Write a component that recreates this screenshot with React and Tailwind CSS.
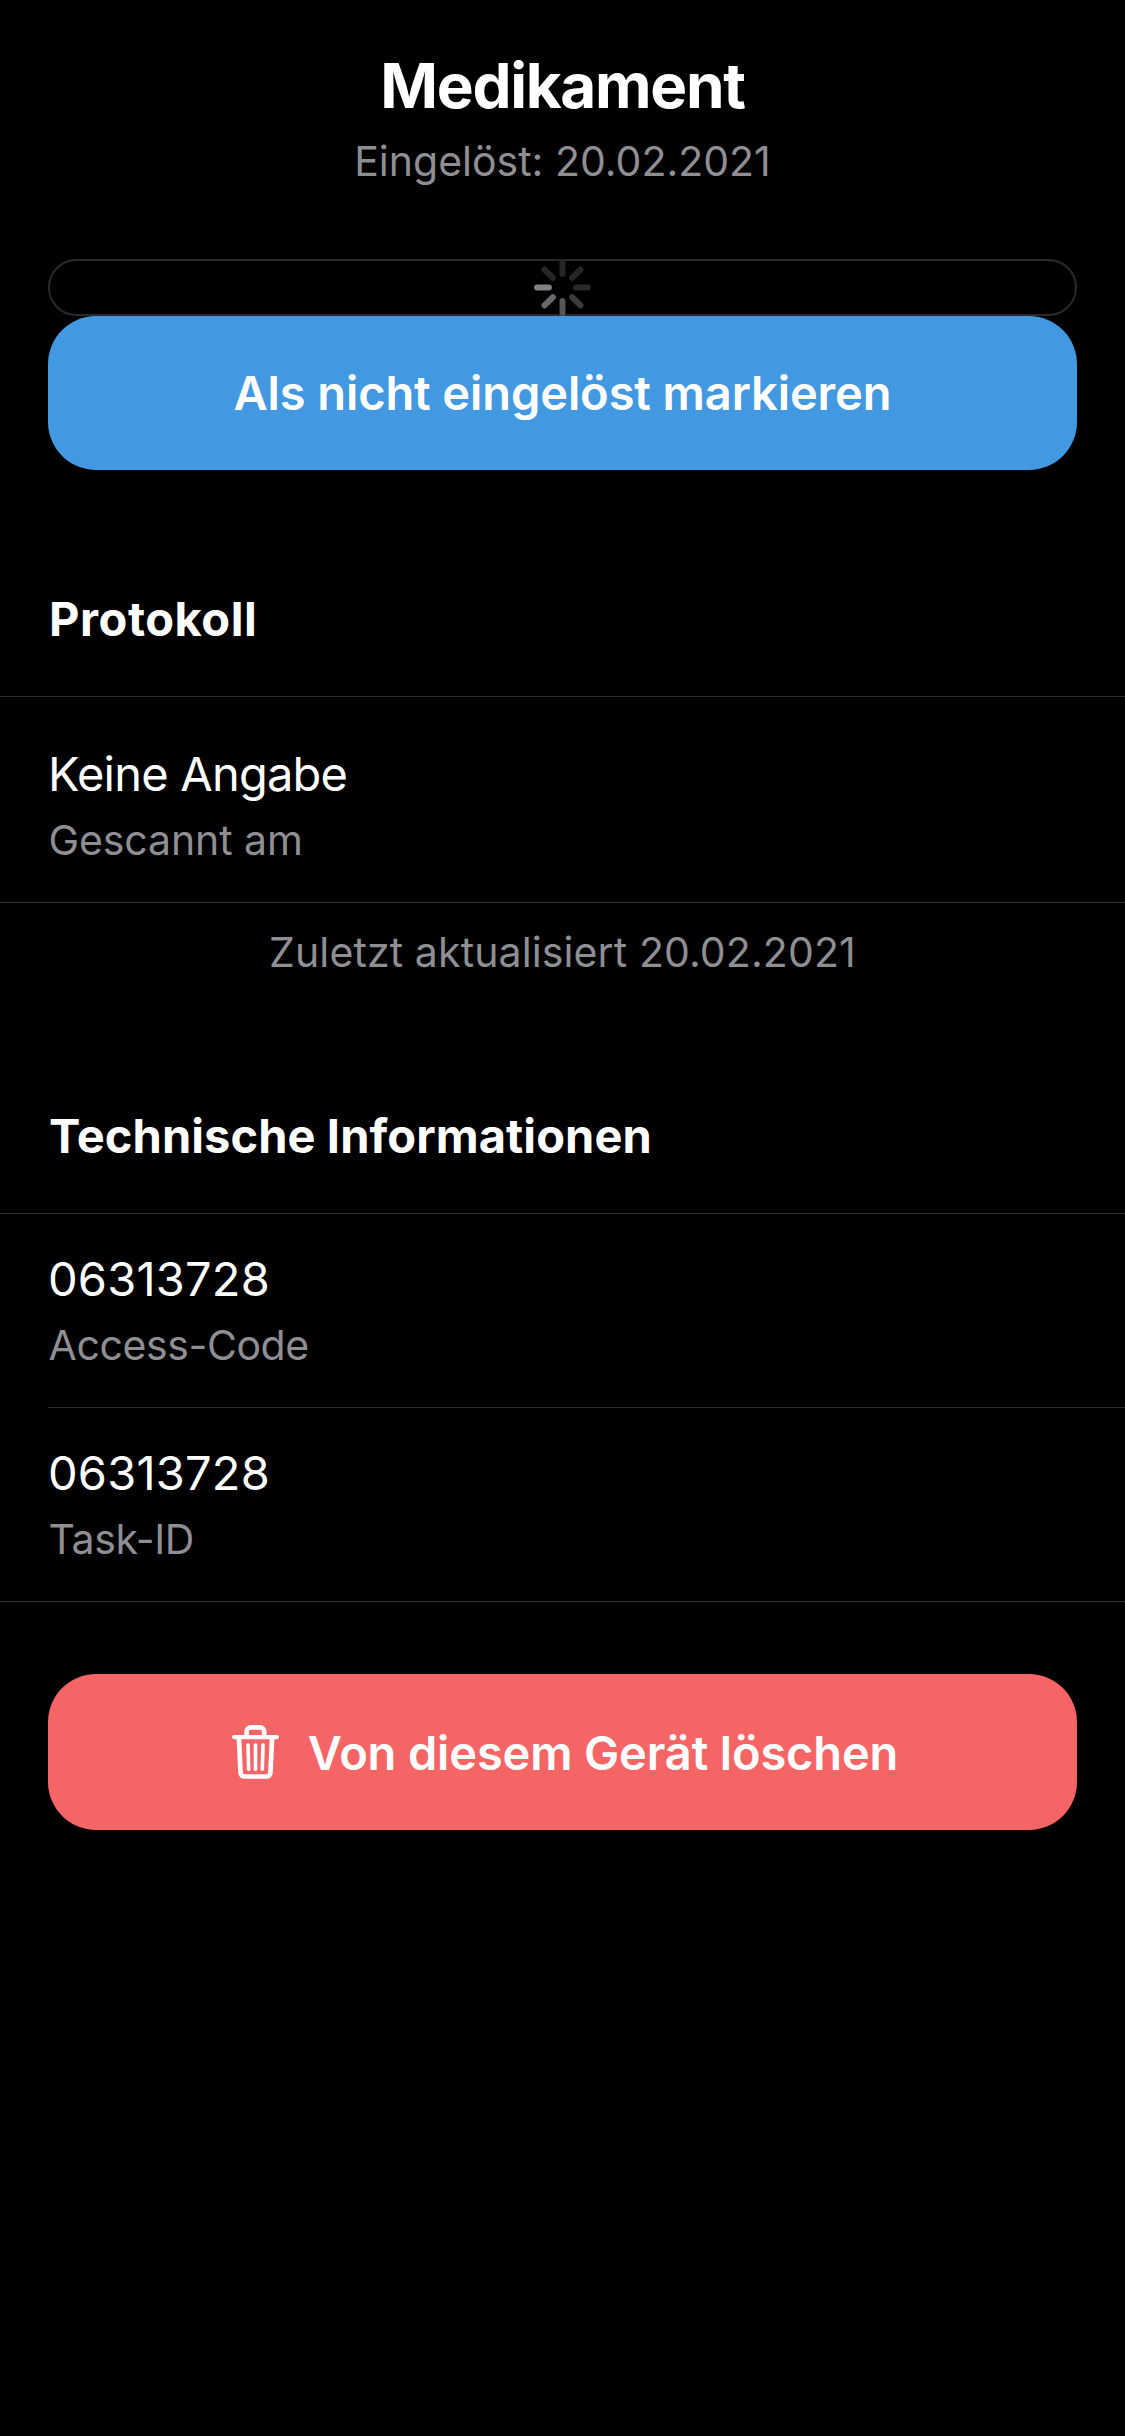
import React from "react";

const PETALS = [
  [0, "#262627"],
  [45, "#262627"],
  [90, "#29292a"],
  [135, "#3c3c3e"],
  [180, "#555558"],
  [225, "#69696d"],
  [270, "#818186"],
  [315, "#262627"],
];

function Spinner() {
  return (
    <svg className="h-[57px] w-[57px] shrink-0" viewBox="-28.5 -28.5 57 57">
      {PETALS.map(([angle, color]) => (
        <rect
          key={angle}
          x="-3"
          y="-28.4"
          width="6"
          height="17.8"
          rx="3"
          fill={color}
          transform={`rotate(${angle})`}
        />
      ))}
    </svg>
  );
}

function TrashIcon() {
  return (
    <svg
      className="h-14 w-12 shrink-0"
      viewBox="0 0 48 56"
      fill="none"
      stroke="white"
      strokeLinecap="round"
      strokeLinejoin="round"
    >
      <path d="M2.1 13.1H44.9" strokeWidth="4.2" />
      <path d="M14.6 12.5V7.6a4.2 4.2 0 0 1 4.2-4.2h9.2a4.2 4.2 0 0 1 4.2 4.2v4.9" strokeWidth="4.6" />
      <path d="M6.9 14l1.7 34.9a3.8 3.8 0 0 0 3.8 3.6h22.2a3.8 3.8 0 0 0 3.8-3.6L40.1 14" strokeWidth="4.7" />
      <path d="M16 21l.7 24.3M23.5 21v24.3M31 21l-.7 24.3" strokeWidth="3.6" />
    </svg>
  );
}

function Heading({ children, className }) {
  return (
    <h2 className={`border-b border-[#303032] pb-[49px] text-[47px] leading-[56px] font-bold ${className}`}>
      {children}
    </h2>
  );
}

function Entry({ value, label, valueClass = "tracking-[0.21px]", labelClass, className = "pt-[37px]" }) {
  return (
    <div className={`pb-[38px] ${className}`}>
      <p className={`text-[47px] leading-[56px] ${valueClass}`}>{value}</p>
      <p className={`mt-3.5 pl-[0.5px] text-[41px] leading-[48px] text-[#8e8e93] ${labelClass}`}>{label}</p>
    </div>
  );
}

export default function App() {
  return (
    <main className="flex h-[2436px] w-[1125px] flex-col overflow-hidden bg-black pt-[47px] font-['Inter',sans-serif] text-white">
      <header className="flex flex-col items-center">
        <h1 className="text-[62px] leading-[78px] font-bold tracking-[-1.3px]">Medikament</h1>
        <p className="mt-3 text-[41px] leading-[48px] text-[#8e8e93]">
          Eingelöst: 20.02.2021
        </p>
      </header>

      <div className="mx-12 mt-[74px] flex h-[57px] items-center justify-center rounded-full border-2 border-[#2a2a2c]">
        <Spinner />
      </div>
      <button className="mx-12 h-[154px] rounded-[48px] bg-[#4299e1] text-[47px] leading-[56px] font-semibold tracking-[-0.096px]">
        Als nicht eingelöst markieren
      </button>

      <section className="mt-[121px]">
        <Heading className="pl-[49px] tracking-[0.55px]">Protokoll</Heading>
        <div className="border-b border-[#303032] pl-12">
          <Entry
            value="Keine Angabe"
            label="Gescannt am"
            valueClass="tracking-[-0.77px]"
            labelClass="tracking-[-0.1px]"
            className="pt-[49px]"
          />
        </div>
        <p className="mt-[25px] text-center text-[41px] leading-[48px] tracking-[0.113px] text-[#8e8e93]">
          Zuletzt aktualisiert 20.02.2021
        </p>
      </section>

      <section className="mt-[132px]">
        <Heading className="pl-[49px] tracking-[0.081px]">Technische Informationen</Heading>
        <div className="border-b border-[#303032] pl-12">
          <div className="border-b border-[#303032]">
            <Entry value="06313728" label="Access-Code" labelClass="tracking-[-0.4px]" />
          </div>
          <Entry value="06313728" label="Task-ID" labelClass="tracking-[-0.4px]" />
        </div>
      </section>

      <button className="mx-12 mt-[72px] flex h-[156px] items-center justify-center gap-7 rounded-[48px] bg-[#f56565] pl-[5px] text-[47px] leading-[56px] font-semibold tracking-[-0.149px]">
        <TrashIcon />
        <span className="pt-0.5">Von diesem Gerät löschen</span>
      </button>
    </main>
  );
}
